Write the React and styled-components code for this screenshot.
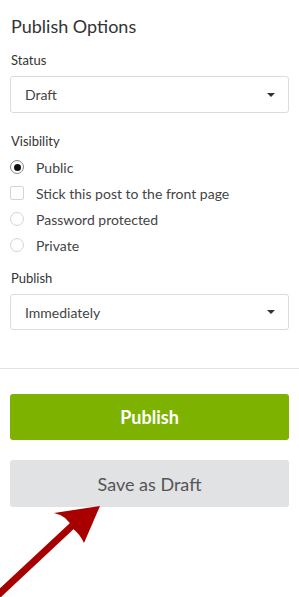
import React from "react";
import styled, { createGlobalStyle } from "styled-components";

const Global = createGlobalStyle`
  html, body {
    margin: 0;
    padding: 0;
    background: #fff;
  }
  body {
    font-family: Lato, "Open Sans", sans-serif;
    color: #333;
  }
`;

const Page = styled.div`
  position: relative;
  width: 299px;
  height: 597px;
  overflow: hidden;
`;

const Options = styled.div`
  padding: 14px 10px 0;
`;

const Title = styled.h2`
  margin: 0 0 14px 1px;
  font-size: 18px;
  line-height: 24px;
  font-weight: 400;
  color: #333;
`;

const Group = styled.div`
  margin-bottom: ${(p) => p.gap ?? 16}px;
`;

const Label = styled.div`
  font-size: 13px;
  line-height: 16px;
  color: #333;
  margin: 0 0 ${(p) => p.gap ?? 8}px 1px;
`;

const Select = styled.div`
  display: flex;
  align-items: center;
  justify-content: space-between;
  height: ${(p) => p.h || 36}px;
  box-sizing: border-box;
  border: 1px solid #dcdcdc;
  border-radius: 3px;
  padding: 0 13px 0 14px;
  font-size: 14px;
  color: #444;
`;

const Caret = styled.span`
  width: 0;
  height: 0;
  border-left: 4px solid transparent;
  border-right: 4px solid transparent;
  border-top: 4px solid #333;
`;

const Option = styled.label`
  display: flex;
  align-items: center;
  gap: 12px;
  height: 26px;
  font-size: 14px;
  color: #444;
`;

const Radio = styled.span`
  box-sizing: border-box;
  width: 14px;
  height: 14px;
  border-radius: 50%;
  border: 1px solid ${(p) => (p.checked ? "#888" : "#d4d4d4")};
  display: flex;
  align-items: center;
  justify-content: center;

  &::after {
    content: "";
    display: ${(p) => (p.checked ? "block" : "none")};
    width: 7px;
    height: 7px;
    border-radius: 50%;
    background: #111;
  }
`;

const Check = styled.span`
  box-sizing: border-box;
  width: 14px;
  height: 14px;
  border-radius: 2px;
  border: 1px solid #d4d4d4;
`;

const Divider = styled.hr`
  margin: 38px 0 0;
  border: 0;
  border-top: 1px solid #e2e2e2;
`;

const Actions = styled.div`
  display: flex;
  flex-direction: column;
  gap: 20px;
  padding: 25px 10px 0;
`;

const Button = styled.button`
  height: ${(p) => (p.primary ? 46 : 47)}px;
  border: 0;
  border-radius: 3px;
  font-family: Lato, "Open Sans", sans-serif;
  font-size: 18px;
  font-weight: ${(p) => (p.primary ? 700 : 400)};
  color: ${(p) => (p.primary ? "#fff" : "#555")};
  background: ${(p) => (p.primary ? "#7db300" : "#e1e2e4")};
`;

const Arrow = styled.svg`
  position: absolute;
  left: 0;
  top: 490px;
`;

export default function App() {
  return (
    <Page>
      <Global />
      <Options>
        <Title>Publish Options</Title>
        <Group gap={20}>
          <Label>Status</Label>
          <Select h={37}>
            Draft
            <Caret />
          </Select>
        </Group>
        <Group gap={12}>
          <Label gap={5}>Visibility</Label>
          <Option>
            <Radio checked />
            Public
          </Option>
          <Option>
            <Check />
            Stick this post to the front page
          </Option>
          <Option>
            <Radio />
            Password protected
          </Option>
          <Option>
            <Radio />
            Private
          </Option>
        </Group>
        <Group gap={0}>
          <Label>Publish</Label>
          <Select>
            Immediately
            <Caret />
          </Select>
        </Group>
      </Options>
      <Divider />
      <Actions>
        <Button primary>Publish</Button>
        <Button>Save as Draft</Button>
      </Actions>
      <Arrow width="110" height="107" viewBox="0 490 110 107">
        <line x1="-2" y1="595" x2="74" y2="524" stroke="#a80000" strokeWidth="7" />
        <path
          d="M100 506 L54 513 Q68 516 72 528 Q80 534 84 543 Z"
          fill="#a80000"
        />
      </Arrow>
    </Page>
  );
}
